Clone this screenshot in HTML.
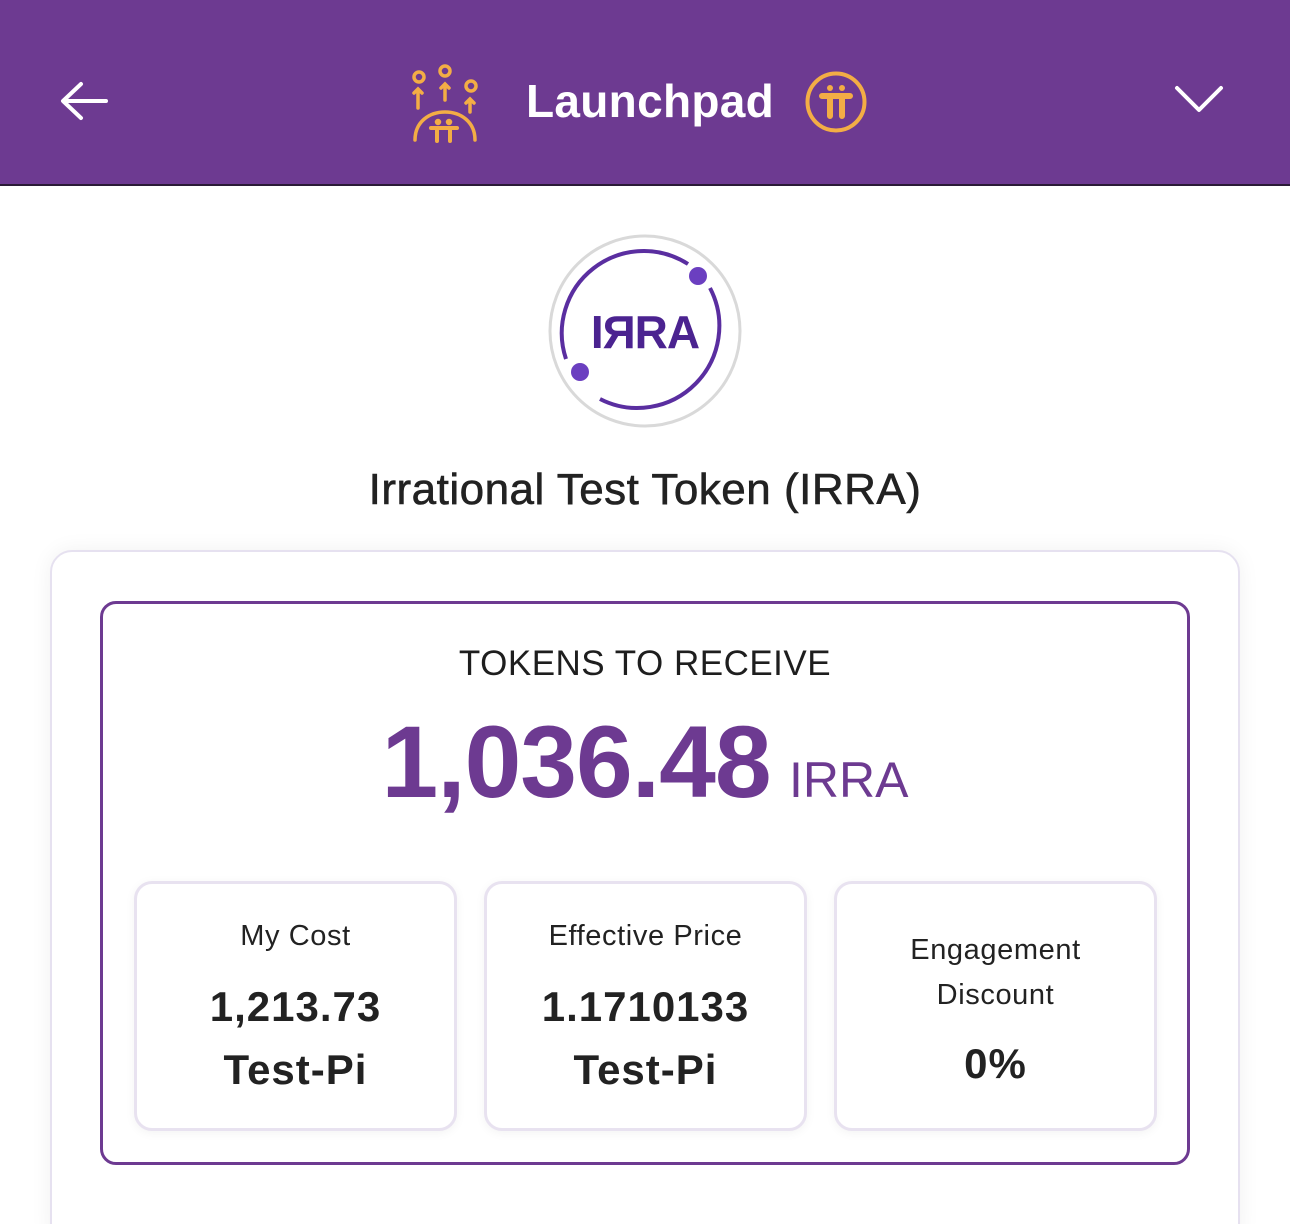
<!DOCTYPE html>
<html><head><style>
*{margin:0;padding:0;box-sizing:border-box}
html,body{width:1290px;height:1224px;overflow:hidden}
body{background:#fff;font-family:"Liberation Sans",sans-serif;position:relative;color:#1e1e1e}
.hdr{position:absolute;left:0;top:0;width:1290px;height:186px;background:#6d3a91;border-bottom:2px solid #2a1a36}
.title{position:absolute;left:526px;top:74px;font-size:46px;color:#fff;font-weight:bold;letter-spacing:0.3px}
.abs{position:absolute}
.outer{position:absolute;left:50px;top:550px;width:1190px;height:700px;border:2px solid #e6e1f0;border-radius:22px;background:#fff;box-shadow:0 0 22px rgba(0,0,0,0.06)}
.inner{position:absolute;left:100px;top:601px;width:1090px;height:564px;border:3px solid #6d3a91;border-radius:16px;background:#fff}
.card{position:absolute;top:881px;width:323px;height:250px;border:3px solid #e8e2f0;border-radius:18px;background:#fff;text-align:center;box-shadow:0 2px 10px rgba(0,0,0,0.05)}
.lbl{font-size:29px;color:#222;letter-spacing:0.6px}
.val{font-size:42px;font-weight:bold;color:#222;line-height:63px;letter-spacing:1px}
</style></head><body>
<div class="hdr"></div>
<svg class="abs" style="left:58px;top:78px" width="52" height="46" viewBox="0 0 52 46"><path d="M48 23H6M23 6L5 23l18 17" fill="none" stroke="#fff" stroke-width="4" stroke-linecap="round" stroke-linejoin="round"/></svg>
<svg class="abs" style="left:1174px;top:84px" width="50" height="32" viewBox="0 0 50 32"><path d="M3 4l22 22L47 4" fill="none" stroke="#fff" stroke-width="4" stroke-linecap="round" stroke-linejoin="round"/></svg>
<svg class="abs" style="left:405px;top:60px" width="80" height="86" viewBox="0 0 80 86" fill="none" stroke="#f3ad45" stroke-width="3.5" stroke-linecap="round">
<circle cx="14" cy="17" r="5"/><circle cx="40" cy="11" r="5"/><circle cx="66" cy="26" r="5"/>
<path d="M13 48V29M9 33l4-4 4 4M40 40V24M36 28l4-4 4 4M65 52V39M61 43l4-4 4 4"/>
<path d="M10 80C10 62 24 52 40 52S70 62 70 80"/>
<path d="M26 68h26M32 68v13M45 68v13" stroke-width="4"/><circle cx="33" cy="62" r="1.5" fill="#f3ad45"/><circle cx="44" cy="62" r="1.5" fill="#f3ad45"/>
</svg>
<div class="title">Launchpad</div>
<svg class="abs" style="left:804px;top:70px" width="64" height="64" viewBox="0 0 64 64"><circle cx="32" cy="32" r="28.5" fill="none" stroke="#f3ad45" stroke-width="4"/>
<path d="M18 26h28M26 26v20M38 26v20" stroke="#f3ad45" stroke-width="6" stroke-linecap="round"/><circle cx="26" cy="18" r="3" fill="#f3ad45"/><circle cx="38" cy="18" r="3" fill="#f3ad45"/></svg>
<svg class="abs" style="left:548px;top:234px" width="194" height="194" viewBox="0 0 194 194">
<circle cx="97" cy="97" r="95" fill="#fff" stroke="#d9d9d9" stroke-width="3"/>
<path d="M140 30A82 82 0 0 0 18 125" fill="none" stroke="#5a2ea0" stroke-width="4"/>
<path d="M162 54A82 82 0 0 1 52 165" fill="none" stroke="#5a2ea0" stroke-width="4"/>
<circle cx="150" cy="42" r="9" fill="#6b3fc0"/><circle cx="32" cy="138" r="9" fill="#6b3fc0"/>
<text x="97" y="114" text-anchor="middle" font-family="Liberation Sans" font-weight="bold" font-size="46" fill="#4b2390" letter-spacing="-1">IЯRA</text>
</svg>
<div class="abs" style="left:0;width:1290px;top:465px;text-align:center;font-size:44px;color:#222;letter-spacing:0.5px;-webkit-text-stroke:0.6px #222">Irrational Test Token (IRRA)</div>
<div class="outer"></div>
<div class="inner"></div>
<div class="abs" style="left:0;width:1290px;top:644px;text-align:center;font-size:35px;color:#1e1e1e;letter-spacing:0.5px">TOKENS TO RECEIVE</div>
<div class="abs" style="left:0;width:1290px;top:704px;text-align:center;color:#6d3a91;white-space:nowrap"><span style="font-size:102px;font-weight:bold;letter-spacing:-1px">1,036.48</span> <span style="font-size:50px;margin-left:14px">IRRA</span></div>
<div class="card" style="left:134px"><div class="lbl" style="margin-top:36px">My Cost</div><div class="val" style="margin-top:22px">1,213.73<br>Test-Pi</div></div>
<div class="card" style="left:484px"><div class="lbl" style="margin-top:36px">Effective Price</div><div class="val" style="margin-top:22px">1.1710133<br>Test-Pi</div></div>
<div class="card" style="left:834px"><div class="lbl" style="margin-top:44px;line-height:45px">Engagement<br>Discount</div><div class="val" style="margin-top:14px">0%</div></div>
</body></html>
